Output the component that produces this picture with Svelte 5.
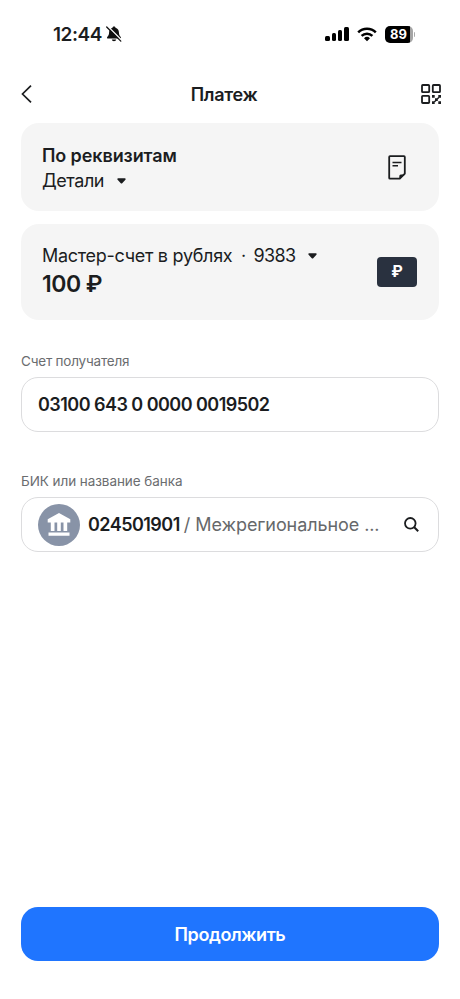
<script>
    let time = "12:44";
    let battery = 89;
    let account = "03100 643 0 0000 0019502";
    let bik = "024501901";
    let bankName = "Межрегиональное ...";

    const signalBars = [5, 8, 11, 14];
</script>

<main class="screen">
    <div class="status-bar">
        <div class="status-left">
            <span class="time">{time}</span>
            <svg class="bell" width="18" height="18" viewBox="0 0 18 18">
                <path
                    d="M9 1.500c-.8 0-1.400.5-1.500 1.200C5.200 3.300 4.200 5 4.100 7.200 4 9.800 3.300 10.800 2.300 11.900c-.6.700-.3 1.700.7 1.700h12c1 0 1.300-1 .7-1.700-1-1.100-1.700-2.100-1.800-4.700-.1-2.200-1.100-3.900-3.400-4.500C10.400 2 9.800 1.500 9 1.500zM6.800 14.600h4.400c-.2 1-1 1.700-2.200 1.700s-2-.7-2.200-1.700z"
                    fill="#111"
                />
                <path d="M2.700 1.200 17 15.500" stroke="#fff" stroke-width="1.300" />
                <path
                    d="M1.700 2 15.800 16.100"
                    stroke="#111"
                    stroke-width="1.300"
                    stroke-linecap="round"
                />
            </svg>
        </div>
        <div class="status-right">
            <div class="signal">
                {#each signalBars as height}
                    <span class="bar" style="height: {height}px"></span>
                {/each}
            </div>
            <svg class="wifi" width="20" height="15" viewBox="0 0 20 15">
                <g fill="none" stroke="#000" stroke-width="2.500">
                    <path d="M1.200 5.300a12.600 12.600 0 0 1 17.600 0" />
                    <path d="M4.600 8.900a7.700 7.700 0 0 1 10.800 0" />
                </g>
                <path d="M7 11.200a4.300 4.300 0 0 1 6 0L10 14.300z" fill="#000" />
            </svg>
            <div class="battery">
                <span class="battery-body">{battery}</span>
                <span class="battery-tip"></span>
            </div>
        </div>
    </div>

    <header class="header">
        <button class="icon-btn" aria-label="Назад">
            <svg width="12" height="20" viewBox="0 0 12 20">
                <path
                    d="M10 1.700 1.500 10l8.500 8.300"
                    fill="none"
                    stroke="#1b1d1f"
                    stroke-width="1.700"
                />
            </svg>
        </button>
        <h1 class="title">Платеж</h1>
        <button class="icon-btn qr" aria-label="Сканировать QR">
            <svg width="20" height="20" viewBox="0 0 20 20">
                <g fill="none" stroke="#1b1d1f" stroke-width="1.800">
                    <rect x="1" y="1" width="7.200" height="7.200" rx=".8" />
                    <rect x="11.800" y="1" width="7.200" height="7.200" rx=".8" />
                    <rect x="1" y="11.800" width="7.200" height="7.200" rx=".8" />
                </g>
                <path
                    d="M11 11h2.700v2.700H11zM17.300 11H20v2.700h-2.700zM14 14.200h2.800V17H14zM11 17.300h2.700V20H11zM17.300 17.300H20V20h-2.700zM16 14.200l1.300-1.300 1 1-1.300 1.300zM13 17.300l1.300-1.300 1 1-1.300 1.300z"
                    fill="#1b1d1f"
                />
            </svg>
        </button>
    </header>

    <section class="card details">
        <div class="card-text">
            <div class="card-title">По реквизитам</div>
            <div class="card-line">
                <span class="details-label">Детали</span>
                <svg class="caret" width="9" height="6" viewBox="0 0 9 6">
                    <path
                        d="M1.200.3h6.600c.9 0 1.200.9.600 1.500L5.200 5.200c-.4.500-1 .5-1.400 0L.6 1.800C0 1.200.3.300 1.200.3z"
                        fill="#1b1d1f"
                    />
                </svg>
            </div>
        </div>
        <svg class="doc" width="18" height="25" viewBox="0 0 18 25">
            <path
                d="M2 1.200h14q.8 0 .8.800v16.700l-5 5H2q-.8 0-.8-.8V2q0-.8.800-.8z"
                fill="none"
                stroke="#1b1d1f"
                stroke-width="1.800"
                stroke-linejoin="round"
            />
            <path d="M11.300 24v-3q0-1.500 1.500-1.500h4.500z" fill="#1b1d1f" />
            <path
                d="M4.500 7.500h9M4.500 10.800h5.500"
                fill="none"
                stroke="#1b1d1f"
                stroke-width="1.600"
            />
        </svg>
    </section>

    <section class="card source">
        <div class="card-text">
            <div class="card-line">
                <span class="source-name">Мастер-счет в рублях</span>
                <span class="dot">·</span>
                <span class="source-number">9383</span>
                <svg class="caret" width="9" height="6" viewBox="0 0 9 6">
                    <path
                        d="M1.200.3h6.600c.9 0 1.200.9.600 1.500L5.200 5.200c-.4.500-1 .5-1.400 0L.6 1.800C0 1.200.3.300 1.200.3z"
                        fill="#1b1d1f"
                    />
                </svg>
            </div>
            <div class="amount">100 ₽</div>
        </div>
        <div class="currency">₽</div>
    </section>

    <div class="field">
        <div class="label account-label">Счет получателя</div>
        <div class="input">
            <span class="account">{account}</span>
        </div>
    </div>

    <div class="field">
        <div class="label">БИК или название банка</div>
        <div class="input">
            <svg class="bank" width="42" height="42" viewBox="0 0 42 42">
                <circle cx="21" cy="21" r="21" fill="#8893a7" />
                <path
                    d="M21 9 32.300 15.200v3.300H9.700v-3.300zM12.800 18h3.700v9h-3.700zM19.200 18h3.600v9h-3.600zM25.500 18h3.700v9h-3.700zM10.500 28.500h21v3.300h-21z"
                    fill="#fff"
                />
            </svg>
            <span class="bik">{bik}</span>
            <span class="slash">/</span>
            <span class="bank-name">{bankName}</span>
            <svg class="search" width="15" height="15" viewBox="0 0 15 15">
                <circle
                    cx="6.300"
                    cy="6.300"
                    r="5.300"
                    fill="none"
                    stroke="#1b1d1f"
                    stroke-width="1.800"
                />
                <path d="m10 10 4.200 4.200" stroke="#1b1d1f" stroke-width="2" />
            </svg>
        </div>
    </div>

    <button class="submit">Продолжить</button>
</main>

<style>
    :global(body) {
        background: #fff;
    }

    .screen {
        box-sizing: border-box;
        display: flex;
        flex-direction: column;
        height: 999px;
        padding: 0 21px 38px;
        font-family: Inter, Roboto, sans-serif;
        color: #1b1d1f;
        background: #fff;
        white-space: nowrap;
    }

    button {
        padding: 0;
        border: 0;
        background: none;
        font: inherit;
        color: inherit;
        cursor: pointer;
    }

    svg {
        display: block;
        flex: none;
    }

    /* status bar */
    .status-bar {
        display: flex;
        justify-content: space-between;
        align-items: center;
        height: 68px;
        padding: 0 24px 0 32px;
    }
    .status-left,
    .status-right {
        display: flex;
        align-items: center;
    }
    .time {
        font-size: 19px;
        font-weight: 600;
        letter-spacing: -0.45px;
    }
    .bell {
        margin-left: 3px;
    }
    .signal {
        display: flex;
        align-items: flex-end;
        gap: 2px;
    }
    .bar {
        width: 4.3px;
        border-radius: 1.5px;
        background: #000;
    }
    .wifi {
        margin-left: 8px;
    }
    .battery {
        display: flex;
        align-items: center;
        gap: 1px;
        margin-left: 8px;
    }
    .battery-body {
        width: 28px;
        height: 17px;
        border-radius: 5px;
        background: linear-gradient(to right, #000 89%, #a5a5a5 89%);
        color: #fff;
        font-size: 13px;
        font-weight: 700;
        line-height: 17px;
        text-align: center;
    }
    .battery-tip {
        width: 1.5px;
        height: 5px;
        border-radius: 0 2px 2px 0;
        background: #aaa;
    }

    /* header */
    .header {
        display: grid;
        grid-template-columns: 1fr auto 1fr;
        align-items: center;
        height: 52px;
        margin-bottom: 3px;
        margin-right: -2px;
    }
    .title {
        margin: 1px 14px 0 0;
        font-size: 18px;
        font-weight: 600;
        line-height: 24px;
        letter-spacing: -0.3px;
    }
    .qr {
        justify-self: end;
    }

    /* cards */
    .card {
        display: flex;
        justify-content: space-between;
        align-items: center;
        box-sizing: border-box;
        padding: 0 22px 0 21px;
        border-radius: 18px;
        background: #f5f5f5;
    }
    .details {
        height: 88px;
        margin-bottom: 13px;
        padding-top: 1px;
        padding-right: 33px;
    }
    .details .card-text {
        padding-top: 1px;
    }
    .source {
        height: 96px;
        margin-bottom: 32px;
        padding-bottom: 1px;
    }
    .source .card-text {
        padding-bottom: 2px;
    }
    .card-title {
        font-size: 18px;
        font-weight: 600;
        line-height: 25px;
        letter-spacing: -0.1px;
    }
    .card-line {
        display: flex;
        align-items: center;
        font-size: 18px;
        line-height: 26px;
    }
    .details-label {
        letter-spacing: -0.45px;
    }
    .source-name {
        letter-spacing: -0.29px;
    }
    .source-number {
        letter-spacing: -0.7px;
    }
    .caret {
        margin-left: 12.5px;
    }
    .dot {
        margin: 0 7.5px 0 8.5px;
    }
    .amount {
        font-size: 23px;
        font-weight: 600;
        line-height: 30px;
        letter-spacing: -0.5px;
    }
    .currency {
        width: 40px;
        height: 30px;
        border-radius: 4px;
        background: #29313f;
        color: #fff;
        font-size: 15.5px;
        font-weight: 700;
        line-height: 30px;
        text-align: center;
    }

    /* fields */
    .field {
        margin-bottom: 40px;
    }
    .label {
        height: 25px;
        font-size: 13.5px;
        line-height: 18px;
        letter-spacing: -0.06px;
        color: #6b6d6f;
    }
    .account-label {
        letter-spacing: -0.2px;
    }
    .input {
        display: flex;
        align-items: center;
        box-sizing: border-box;
        height: 55px;
        padding: 0 19px 0 16px;
        border: 1px solid #dcdcde;
        border-radius: 17px;
        font-size: 18px;
    }
    .account,
    .bik {
        font-weight: 600;
        letter-spacing: -0.54px;
    }
    .bik {
        margin-left: 8px;
    }
    .slash {
        margin: 0 5px 0 4px;
        color: #66686a;
    }
    .bank-name {
        letter-spacing: -0.08px;
        color: #66686a;
    }
    .search {
        margin-left: auto;
    }

    .submit {
        height: 54px;
        margin-top: auto;
        border-radius: 17px;
        background: #1f75ff;
        color: #fff;
        font-size: 18px;
        font-weight: 600;
        letter-spacing: -0.4px;
    }
</style>
